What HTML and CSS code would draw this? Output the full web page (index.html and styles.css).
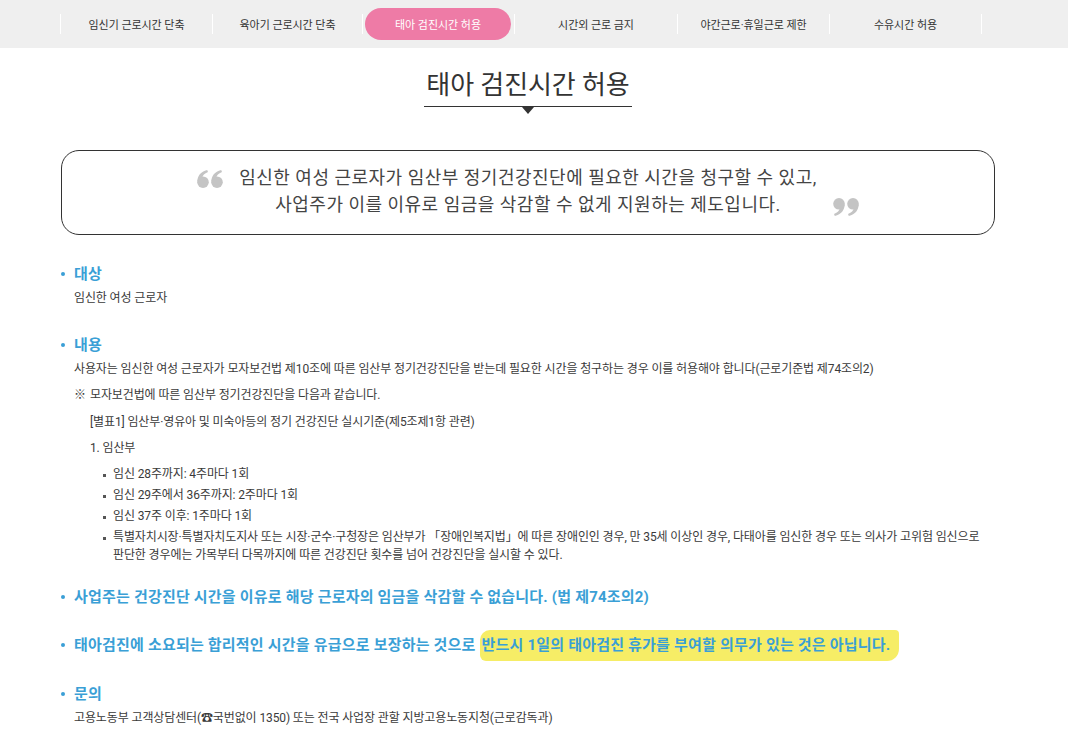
FILE: index.html
```html
<!DOCTYPE html>
<html lang="ko">
<head>
<meta charset="utf-8">
<title>태아 검진시간 허용</title>
<link rel="stylesheet" href="styles.css">
</head>
<body>
<nav class="tabs">
  <div class="tabs-inner">
    <span class="sep"></span>
    <a class="tab t1">임신기 근로시간 단축</a>
    <span class="sep"></span>
    <a class="tab t2">육아기 근로시간 단축</a>
    <span class="sep"></span>
    <a class="tab t3 active">태아 검진시간 허용</a>
    <span class="sep"></span>
    <a class="tab t4">시간외 근로 금지</a>
    <span class="sep"></span>
    <a class="tab t5">야간근로·휴일근로 제한</a>
    <span class="sep"></span>
    <a class="tab t6">수유시간 허용</a>
    <span class="sep"></span>
  </div>
</nav>
<main class="page">
  <div class="title-wrap">
    <h1 class="title">태아 검진시간 허용</h1>
    <span class="title-arrow"></span>
  </div>
  <div class="quote-box">
    <svg class="q q-open" width="26" height="18" viewBox="0 0 26 18" aria-hidden="true">
      <g fill="#c4c4c4">
        <circle cx="6" cy="12.2" r="5.8"/>
        <path d="M0.3,12 C0.4,6 3.6,1.6 10.2,0 L11,1.9 C7.4,3.4 5.6,5.6 5.4,7.2 L2,9.5 Z"/>
        <circle cx="20" cy="12.2" r="5.8"/>
        <path d="M14.3,12 C14.4,6 17.6,1.6 24.2,0 L25,1.9 C21.4,3.4 19.6,5.6 19.4,7.2 L16,9.5 Z"/>
      </g>
    </svg>
    <p class="quote-text">임신한 여성 근로자가 임산부 정기건강진단에 필요한 시간을 청구할 수 있고,<br>사업주가 이를 이유로 임금을 삭감할 수 없게 지원하는 제도입니다.</p>
    <svg class="q q-close" width="26" height="18" viewBox="0 0 26 18" aria-hidden="true">
      <g fill="#c4c4c4" transform="rotate(180 13 9)">
        <circle cx="6" cy="12.2" r="5.8"/>
        <path d="M0.3,12 C0.4,6 3.6,1.6 10.2,0 L11,1.9 C7.4,3.4 5.6,5.6 5.4,7.2 L2,9.5 Z"/>
        <circle cx="20" cy="12.2" r="5.8"/>
        <path d="M14.3,12 C14.4,6 17.6,1.6 24.2,0 L25,1.9 C21.4,3.4 19.6,5.6 19.4,7.2 L16,9.5 Z"/>
      </g>
    </svg>
  </div>

  <section class="sec sec-first">
    <h3 class="sec-head">대상</h3>
    <p class="body">임신한 여성 근로자</p>
  </section>

  <section class="sec">
    <h3 class="sec-head">내용</h3>
    <p class="body">사용자는 임신한 여성 근로자가 모자보건법 제10조에 따른 임산부 정기건강진단을 받는데 필요한 시간을 청구하는 경우 이를 허용해야 합니다(근로기준법 제74조의2)</p>
    <p class="body"><span class="note-mark">※</span>모자보건법에 따른 임산부 정기건강진단을 다음과 같습니다.</p>
    <p class="body indent">[별표1] 임산부·영유아 및 미숙아등의 정기 건강진단 실시기준(제5조제1항 관련)</p>
    <p class="body indent">1. 임산부</p>
    <ul class="items">
      <li>임신 28주까지: 4주마다 1회</li>
      <li>임신 29주에서 36주까지: 2주마다 1회</li>
      <li>임신 37주 이후: 1주마다 1회</li>
      <li>특별자치시장·특별자치도지사 또는 시장·군수·구청장은 임산부가 「장애인복지법」에 따른 장애인인 경우, 만 35세 이상인 경우, 다태아를 임신한 경우 또는 의사가 고위험 임신으로 판단한 경우에는 가목부터 다목까지에 따른 건강진단 횟수를 넘어 건강진단을 실시할 수 있다.</li>
    </ul>
  </section>

  <section class="sec">
    <h3 class="sec-head">사업주는 건강진단 시간을 이유로 해당 근로자의 임금을 삭감할 수 없습니다. (법 제74조의2)</h3>
  </section>

  <section class="sec">
    <h3 class="sec-head">태아검진에 소요되는 합리적인 시간을 유급으로 보장하는 것으로&nbsp;<span class="marker">반드시 1일의 태아검진 휴가를 부여할 의무가 있는 것은 아닙니다.</span></h3>
  </section>

  <section class="sec">
    <h3 class="sec-head">문의</h3>
    <p class="body">고용노동부 고객상담센터(☎국번없이 1350) 또는 전국 사업장 관할 지방고용노동지청(근로감독과)</p>
  </section>
</main>
</body>
</html>
```

FILE: styles.css
```css
html, body {
  margin: 0;
  padding: 0;
  background: #ffffff;
}

body {
  font-family: Roboto, "Noto Sans CJK KR", "Noto Sans", sans-serif;
  color: #3a3a3a;
  word-break: keep-all;
}

/* ---------- top tabs ---------- */
.tabs {
  background: #efefef;
  height: 48px;
}

.tabs-inner {
  display: flex;
  align-items: center;
  height: 48px;
  padding-left: 60px;
}

.sep {
  flex: none;
  width: 1px;
  height: 20px;
  background: #ffffff;
}

.tab {
  flex: none;
  display: flex;
  align-items: center;
  justify-content: center;
  height: 32px;
  font-size: 11px;
  letter-spacing: -0.05px;
  color: #333333;
  text-decoration: none;
  white-space: nowrap;
}

.t1 { width: 151px; }
.t2 { width: 149px; }
.t3 { width: 151px; }
.t4 { width: 162px; }
.t5 { width: 151px; }
.t6 { width: 151px; }

.tab.active {
  width: 146px;
  margin: 0 3px 0 2px;
  background: #ee7ba6;
  border-radius: 16px;
  color: #ffffff;
}

/* ---------- page ---------- */
.page {
  width: 934px;
  margin-left: 61px;
  padding-bottom: 40px;
}

.title-wrap {
  display: flex;
  flex-direction: column;
  align-items: center;
  padding-top: 20px;
}

.title {
  margin: 0;
  padding: 0 2px 4px;
  font-size: 26px;
  line-height: 34px;
  font-weight: 400;
  letter-spacing: -0.1px;
  color: #333333;
  border-bottom: 1px solid #333333;
}

.title-arrow {
  width: 0;
  height: 0;
  border-left: 6px solid transparent;
  border-right: 6px solid transparent;
  border-top: 7px solid #333333;
}

/* ---------- quote box ---------- */
.quote-box {
  margin-top: 36px;
  box-sizing: border-box;
  height: 85px;
  border: 1px solid #333333;
  border-radius: 18px;
  display: flex;
  justify-content: center;
  align-items: flex-start;
  gap: 16px;
  padding-top: 13px;
}

.quote-text {
  margin: 0;
  font-size: 18px;
  line-height: 27px;
  letter-spacing: 0.5px;
  color: #444444;
  text-align: center;
}

.q {
  flex: none;
  display: block;
}

.q-open {
  margin-top: 6px;
}

.q-close {
  margin-top: 34px;
}

/* ---------- sections ---------- */
.sec {
  margin-top: 22px;
}

.sec-first {
  margin-top: 28px;
}

.sec-head {
  display: flex;
  align-items: center;
  margin: 0;
  font-size: 15px;
  line-height: 22px;
  font-weight: 700;
  letter-spacing: 0.2px;
  color: #3a9fd6;
}

.sec-head::before {
  content: "";
  flex: none;
  width: 4px;
  height: 4px;
  border-radius: 50%;
  background: #3a9fd6;
  margin-right: 9px;
}

.marker {
  background: #f6ed66;
  padding: 4px 9px 5px 2px;
  border-radius: 10px 4px 12px 6px;
}

.body {
  margin: 0;
  padding-left: 13px;
  font-size: 12px;
  line-height: 26.6px;
  letter-spacing: -0.12px;
  color: #3a3a3a;
}

.body.indent {
  padding-left: 29px;
}

.note-mark {
  display: inline-block;
  width: 16px;
}

.items {
  list-style: none;
  margin: 0 0 2px;
  padding: 0 0 0 42px;
}

.items li {
  display: flex;
  align-items: flex-start;
  margin-top: 3px;
  font-size: 12px;
  line-height: 18px;
  letter-spacing: -0.12px;
  color: #3a3a3a;
}

.items li::before {
  content: "";
  flex: none;
  width: 3px;
  height: 3px;
  background: #555555;
  margin: 9px 7px 0 0;
}
```
